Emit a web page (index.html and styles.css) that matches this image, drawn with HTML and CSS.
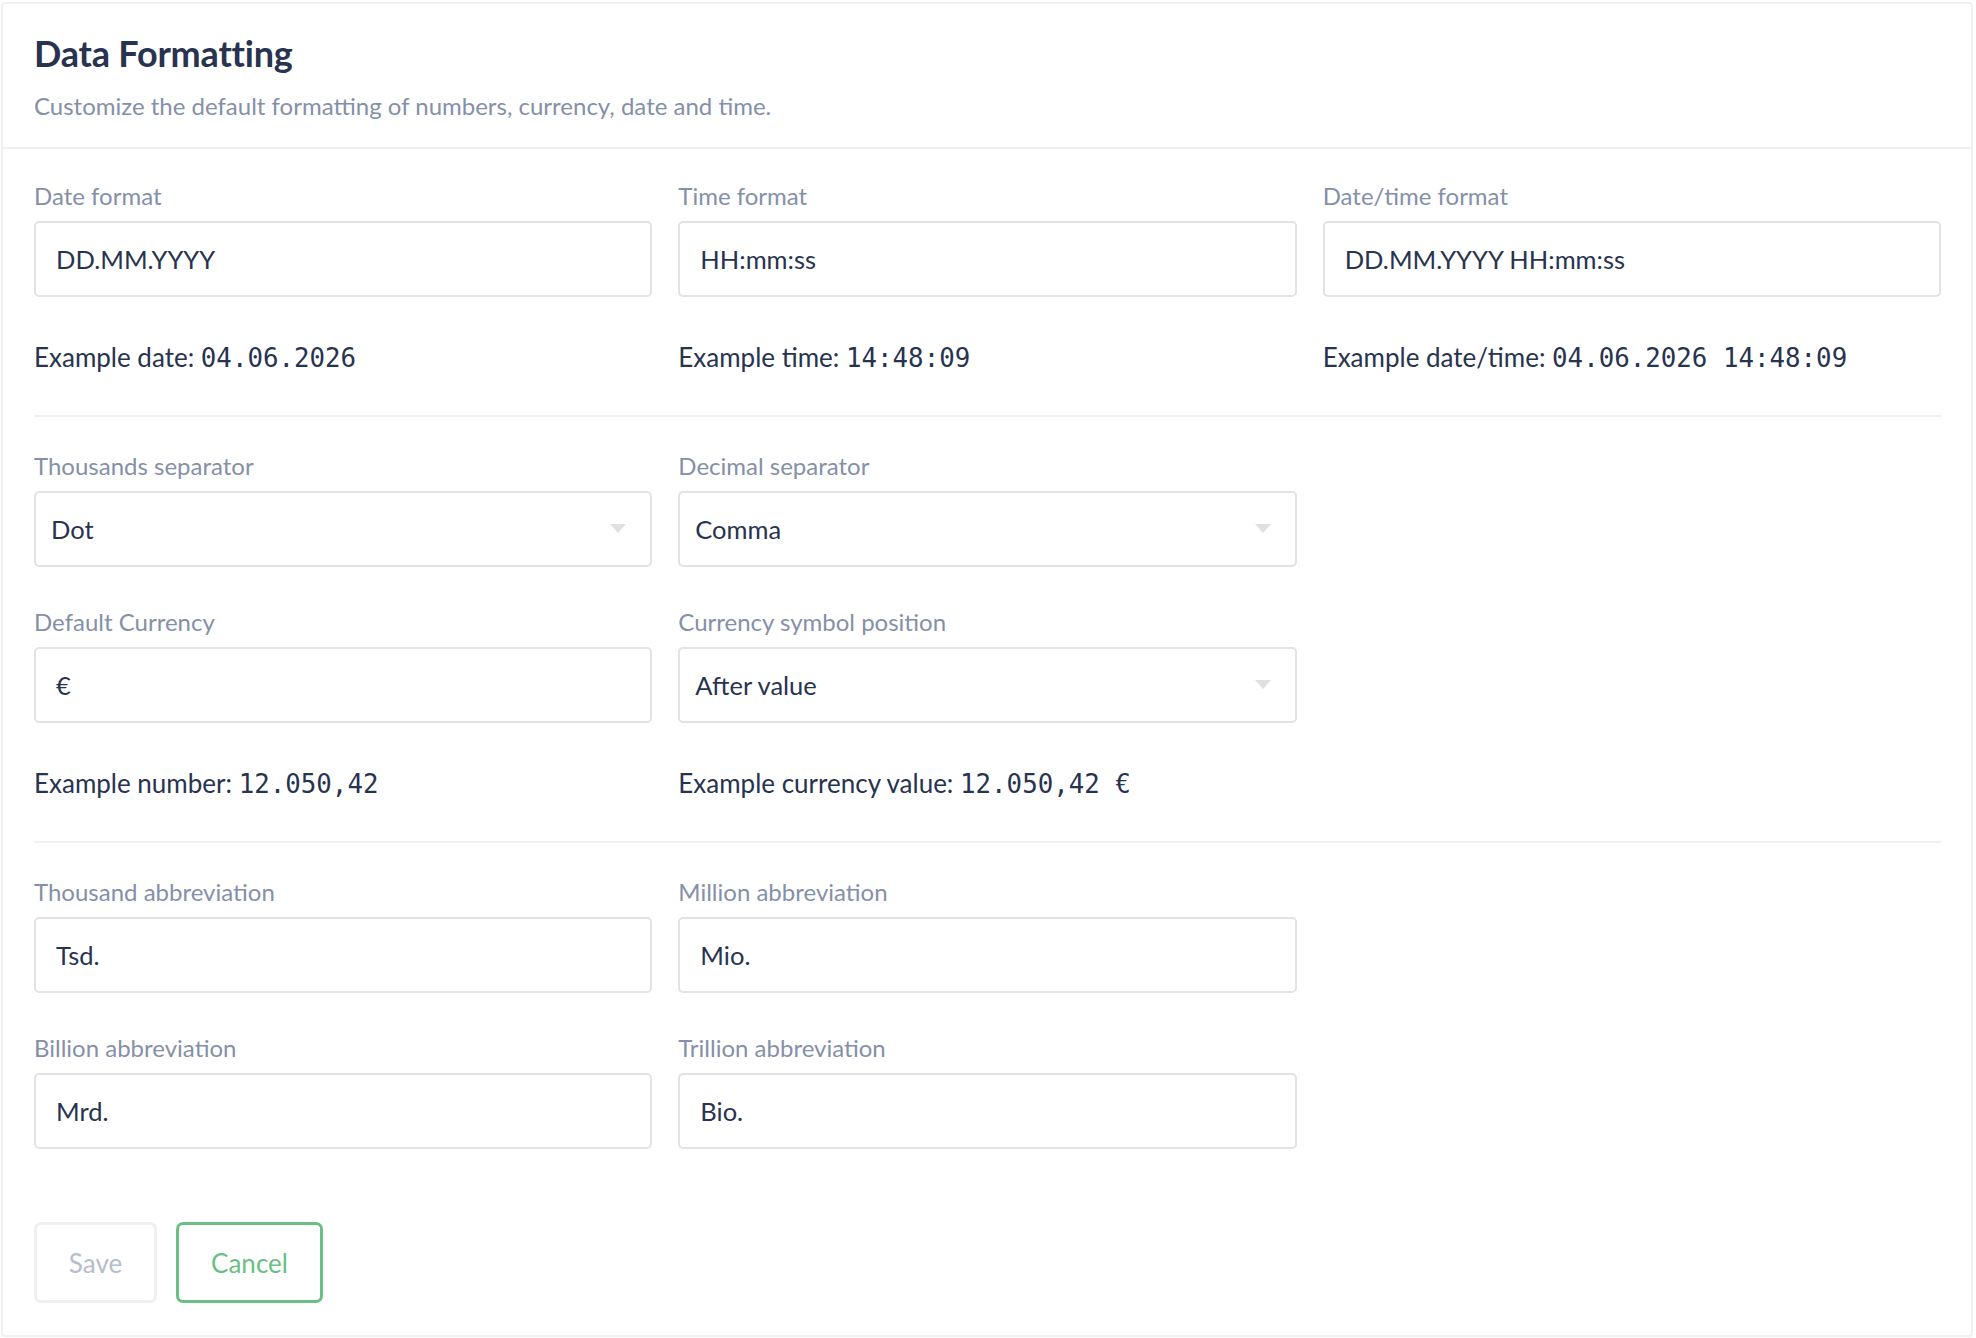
FILE: index.html
```html
<!DOCTYPE html>
<html lang="en">
<head>
<meta charset="UTF-8" />
<title>Data Formatting</title>
<link rel="stylesheet" href="styles.css">
</head>
<body>

<div class="card">
  <div class="card-header">
    <h1>Data Formatting</h1>
    <p>Customize the default formatting of numbers, currency, date and time.</p>
  </div>

  <div class="card-body">
    <div class="grid">
      <div class="field">
        <label>Date format</label>
        <div class="input">DD.MM.YYYY</div>
        <div class="example">Example date: <code>04.06.2026</code></div>
      </div>
      <div class="field">
        <label>Time format</label>
        <div class="input">HH:mm:ss</div>
        <div class="example">Example time: <code>14:48:09</code></div>
      </div>
      <div class="field">
        <label>Date/time format</label>
        <div class="input">DD.MM.YYYY HH:mm:ss</div>
        <div class="example">Example date/time: <code>04.06.2026 14:48:09</code></div>
      </div>
    </div>

    <hr class="divider">

    <div class="grid">
      <div class="field">
        <label>Thousands separator</label>
        <div class="input select">Dot<span class="caret"></span></div>
      </div>
      <div class="field">
        <label>Decimal separator</label>
        <div class="input select">Comma<span class="caret"></span></div>
      </div>
      <div></div>
      <div class="field">
        <label>Default Currency</label>
        <div class="input">€</div>
        <div class="example">Example number: <code>12.050,42</code></div>
      </div>
      <div class="field">
        <label>Currency symbol position</label>
        <div class="input select">After value<span class="caret"></span></div>
        <div class="example">Example currency value: <code>12.050,42 €</code></div>
      </div>
    </div>

    <hr class="divider">

    <div class="grid">
      <div class="field">
        <label>Thousand abbreviation</label>
        <div class="input">Tsd.</div>
      </div>
      <div class="field">
        <label>Million abbreviation</label>
        <div class="input">Mio.</div>
      </div>
      <div></div>
      <div class="field">
        <label>Billion abbreviation</label>
        <div class="input">Mrd.</div>
      </div>
      <div class="field">
        <label>Trillion abbreviation</label>
        <div class="input">Bio.</div>
      </div>
    </div>

    <div class="actions">
      <button class="btn btn-save" disabled>Save</button>
      <button class="btn btn-cancel">Cancel</button>
    </div>
  </div>
</div>

</body>
</html>
```

FILE: styles.css
```css
:root {
  --navy: #283350;
  --muted: #8590a8;
  --line: #e3e3e3;
  --soft: #f0f0f0;
  --green: #6bbf85;
}
* { margin:0; padding:0; box-sizing:border-box; }
body {
  font-family: 'Lato', 'Liberation Sans', sans-serif;
  color: var(--navy);
  background: #fff;
  padding: 2px 3px 0 1px;
}
.card {
  border: 2px solid var(--soft);
  border-radius: 4px;
  background: #fff;
}
.card-header {
  padding: 27px 31px 26px;
  border-bottom: 2px solid var(--soft);
}
.card-header h1 {
  font-size: 36px; font-weight: 700;
  line-height: 44px; letter-spacing: -0.2px;
}
.card-header p {
  margin-top: 16px;
  font-size: 24px; line-height: 30px;
  color: var(--muted);
}
.card-body { padding: 33px 30px 32px 31px; }
.grid {
  display: grid;
  grid-template-columns: repeat(3, 1fr);
  column-gap: 26px; row-gap: 41px;
}
.field label {
  display: block;
  font-size: 24px; line-height: 28px;
  color: var(--muted);
  margin-bottom: 11px;
}
.input {
  position: relative;
  height: 76px;
  border: 2px solid var(--line);
  border-radius: 5px;
  padding: 0 20px;
  display: flex; align-items: center;
  font-size: 25.5px;
  color: var(--navy);
}
.select { padding-left: 15px; }
.caret {
  position: absolute; right: 24px; top: 50%;
  margin-top: -5px;
  width: 0; height: 0;
  border-left: 8px solid transparent;
  border-right: 8px solid transparent;
  border-top: 9px solid #e0e0e0;
}
.example {
  margin-top: 44px;
  font-size: 26px; line-height: 32px;
}
.example code {
  font-family: 'DejaVu Sans Mono', monospace;
  font-size: 25.8px;
}
.divider {
  border: none;
  border-top: 2px solid var(--soft);
  margin: 41px 0 35px;
}
.actions {
  display: flex; gap: 19px;
  margin-top: 73px;
}
.btn {
  height: 81px;
  background: #fff;
  border-radius: 7px;
  font-family: inherit;
  font-size: 26px;
  cursor: pointer;
}
.btn-save {
  width: 123px;
  border: 3px solid var(--soft);
  color: #b6bdcb;
}
.btn-cancel {
  width: 147px;
  border: 3px solid var(--green);
  color: var(--green);
}
```
